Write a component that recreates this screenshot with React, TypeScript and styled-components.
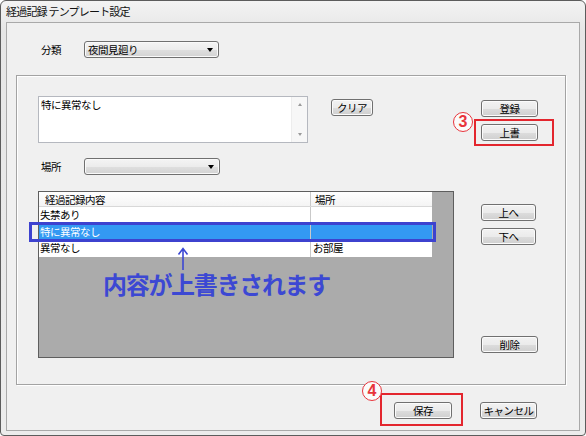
import React from "react";
import styled, { createGlobalStyle } from "styled-components";

const GlobalStyle = createGlobalStyle`
  html, body {
    margin: 0;
    padding: 0;
    background: #ffffff;
  }
  body {
    font-family: "Noto Sans CJK JP", "DejaVu Sans", sans-serif;
  }
`;

const uiFont = `"Noto Sans CJK JP", "DejaVu Sans", sans-serif`;

const Window = styled.div`
  box-sizing: border-box;
  width: 586px;
  height: 436px;
  display: flex;
  flex-direction: column;
  padding: 0 5px 4px 5px;
  border: 1px solid #5c5c5c;
  border-radius: 6px 6px 4px 4px;
  background: linear-gradient(#f3f3f3, #e6e6e6 30px, #ececec);
`;

const TitleBar = styled.div`
  height: 21px;
  line-height: 21px;
  font-family: ${uiFont};
  font-size: 11px;
  letter-spacing: -0.8px;
  color: #111;
`;

const Client = styled.div`
  flex: 1;
  display: flex;
  flex-direction: column;
  border: 1px solid #a9a9a9;
  background: #f0f0f0;
  font-family: ${uiFont};
  font-size: 10.5px;
  letter-spacing: -0.5px;
  color: #000;
`;

const FieldRow = styled.div<{ $pt: number; $pl: number }>`
  display: flex;
  align-items: center;
  padding: ${(p) => p.$pt}px 0 0 ${(p) => p.$pl}px;
`;

const Label = styled.span`
  width: 43px;
  line-height: 17px;
`;

const Combo = styled.div<{ $w: number }>`
  box-sizing: border-box;
  width: ${(p) => p.$w}px;
  height: 17px;
  display: flex;
  align-items: center;
  justify-content: space-between;
  padding: 0 5px 0 3px;
  border: 1px solid #707070;
  border-radius: 3px;
  background: linear-gradient(#f4f4f4 0%, #ececec 50%, #dfdfdf 51%, #d3d3d3 100%);
  box-shadow: inset 0 0 0 1px #fafafa;
`;

const ComboText = styled.span`
  line-height: 15px;
`;

const ComboArrow = styled.span`
  width: 0;
  height: 0;
  border-left: 3px solid transparent;
  border-right: 3px solid transparent;
  border-top: 4px solid #000;
`;

const GroupBox = styled.div`
  box-sizing: border-box;
  width: 550px;
  height: 310px;
  margin: 17px 0 0 9px;
  display: flex;
  justify-content: space-between;
  border: 1px solid #a3a3a3;
  box-shadow: inset 1px 1px 0 #ffffff, 1px 1px 0 #ffffff;
`;

const LeftPane = styled.div`
  display: flex;
  flex-direction: column;
  padding: 20px 0 0 21px;
`;

const MemoRow = styled.div`
  display: flex;
  align-items: flex-start;
  gap: 23px;
`;

const Memo = styled.div`
  box-sizing: border-box;
  width: 270px;
  height: 47px;
  display: flex;
  border: 1px solid #b5b8bf;
  background: #ffffff;
`;

const MemoText = styled.div`
  flex: 1;
  padding: 1px 2px;
  line-height: 14px;
`;

const MemoScroll = styled.div`
  width: 15px;
  display: flex;
  flex-direction: column;
  align-items: center;
  justify-content: space-between;
  padding: 6px 0;
  background: #f7f7f7;
  border-left: 1px solid #ededed;
`;

const ScrollArrow = styled.span<{ $down?: boolean }>`
  width: 0;
  height: 0;
  border-left: 2px solid transparent;
  border-right: 2px solid transparent;
  ${(p) =>
    p.$down ? "border-top: 3px solid #9a9a9a;" : "border-bottom: 3px solid #9a9a9a;"}
`;

const Button = styled.button<{ $w?: number; $mt?: number }>`
  box-sizing: border-box;
  width: ${(p) => p.$w ?? 57}px;
  height: 17px;
  margin: ${(p) => p.$mt ?? 0}px 0 0 0;
  padding: 0;
  border: 1px solid #707070;
  border-radius: 3px;
  background: linear-gradient(#f2f2f2 0%, #ebebeb 50%, #dddddd 51%, #cfcfcf 100%);
  box-shadow: inset 0 0 0 1px #fbfbfb;
  font-family: ${uiFont};
  font-size: 10.5px;
  letter-spacing: -0.5px;
  line-height: 15px;
  color: #000;
`;

const SidePane = styled.div`
  width: 57px;
  display: flex;
  flex-direction: column;
  align-items: flex-start;
  padding: 24px 27px 0 0;
`;

const Marker = styled.div<{ $mt?: number }>`
  position: relative;
  display: flex;
  margin-top: ${(p) => p.$mt ?? 0}px;
`;

const RedFrame = styled.div<{ $l: number; $t: number; $w: number; $h: number }>`
  position: absolute;
  box-sizing: border-box;
  left: ${(p) => p.$l}px;
  top: ${(p) => p.$t}px;
  width: ${(p) => p.$w}px;
  height: ${(p) => p.$h}px;
  border: 2px solid #e3262e;
  pointer-events: none;
`;

const CircleNum = styled.span<{ $l: number; $t: number }>`
  position: absolute;
  box-sizing: border-box;
  left: ${(p) => p.$l}px;
  top: ${(p) => p.$t}px;
  width: 20px;
  height: 20px;
  display: flex;
  align-items: center;
  justify-content: center;
  border: 1.5px solid #e8343c;
  border-radius: 50%;
  background: #fbfbfb;
  color: #e8343c;
  font-family: "Liberation Sans", Arial, sans-serif;
  font-weight: bold;
  font-size: 16px;
  letter-spacing: 0;
  line-height: 1;
`;

const Grid = styled.div`
  position: relative;
  box-sizing: border-box;
  width: 416px;
  height: 167px;
  margin-top: 16px;
  border: 1px solid #5e5e5e;
  background: #ababab;
`;

const GridLine = styled.div<{ $selected?: boolean; $head?: boolean }>`
  width: 393px;
  height: ${(p) => (p.$head ? 15 : 16.6)}px;
  display: flex;
  background: ${(p) =>
    p.$head
      ? "linear-gradient(#ffffff, #f4f4f4)"
      : p.$selected
      ? "#3399f3"
      : "#ffffff"};
  color: ${(p) => (p.$selected ? "#ffffff" : "#000000")};
  border-bottom: ${(p) => (p.$head ? "1px solid #d8d8d8" : "none")};
  box-sizing: border-box;
`;

const Cell = styled.div<{ $w: number; $pl: number; $last?: boolean }>`
  box-sizing: border-box;
  width: ${(p) => p.$w}px;
  padding-left: ${(p) => p.$pl}px;
  line-height: 15px;
  white-space: nowrap;
  border-right: ${(p) => (p.$last ? "none" : "1px solid #c9c9c9")};
`;

const BlueFrame = styled.div`
  position: absolute;
  box-sizing: border-box;
  left: -10px;
  top: 30px;
  width: 407px;
  height: 20px;
  border: 3px solid #3d42cf;
  pointer-events: none;
`;

const Note = styled.div`
  position: absolute;
  left: 64px;
  top: 55px;
  display: flex;
  flex-direction: column;
  align-items: flex-start;
`;

const NoteArrow = styled.svg`
  margin-left: 74px;
  display: block;
`;

const NoteText = styled.div`
  margin-top: 1px;
  font-family: ${uiFont};
  font-weight: bold;
  font-size: 24px;
  letter-spacing: -1.3px;
  line-height: 26px;
  color: #3c48d3;
  white-space: nowrap;
`;

const Footer = styled.div`
  display: flex;
  justify-content: flex-end;
  gap: 28px;
  padding: 17px 42px 0 0;
`;

type Row = { text: string; place: string; selected?: boolean };

const rows: Row[] = [
  { text: "失禁あり", place: "" },
  { text: "特に異常なし", place: "", selected: true },
  { text: "異常なし", place: "お部屋" },
];

export default function App() {
  return (
    <>
      <GlobalStyle />
      <Window>
        <TitleBar>経過記録 テンプレート設定</TitleBar>
        <Client>
          <FieldRow $pt={18} $pl={34}>
            <Label>分類</Label>
            <Combo $w={135}>
              <ComboText>夜間見廻り</ComboText>
              <ComboArrow />
            </Combo>
          </FieldRow>

          <GroupBox>
            <LeftPane>
              <MemoRow>
                <Memo>
                  <MemoText>特に異常なし</MemoText>
                  <MemoScroll>
                    <ScrollArrow />
                    <ScrollArrow $down />
                  </MemoScroll>
                </Memo>
                <Button $w={42} $mt={3}>
                  クリア
                </Button>
              </MemoRow>

              <FieldRow $pt={15} $pl={3}>
                <Label>場所</Label>
                <Combo $w={136}>
                  <ComboText />
                  <ComboArrow />
                </Combo>
              </FieldRow>

              <Grid>
                <GridLine $head>
                  <Cell $w={272} $pl={6}>
                    経過記録内容
                  </Cell>
                  <Cell $w={121} $pl={4} $last>
                    場所
                  </Cell>
                </GridLine>
                {rows.map((r) => (
                  <GridLine key={r.text} $selected={r.selected}>
                    <Cell $w={272} $pl={1}>
                      {r.text}
                    </Cell>
                    <Cell $w={121} $pl={2} $last>
                      {r.place}
                    </Cell>
                  </GridLine>
                ))}
                <BlueFrame />
                <Note>
                  <NoteArrow width="12" height="23" viewBox="0 0 12 23">
                    <path
                      d="M6 2 V23 M1.5 7.5 L6 1.5 L10.5 7.5"
                      fill="none"
                      stroke="#3c48d3"
                      strokeWidth="1.6"
                    />
                  </NoteArrow>
                  <NoteText>内容が上書きされます</NoteText>
                </Note>
              </Grid>
            </LeftPane>

            <SidePane>
              <Button>登録</Button>
              <Marker $mt={7}>
                <Button>上書</Button>
                <RedFrame $l={-7} $t={-5} $w={80} $h={27} />
                <CircleNum $l={-28} $t={-12}>3</CircleNum>
              </Marker>
              <Button $w={55} $mt={63}>
                上へ
              </Button>
              <Button $w={55} $mt={7}>
                下へ
              </Button>
              <Button $mt={91}>削除</Button>
            </SidePane>
          </GroupBox>

          <Footer>
            <Marker>
              <Button $w={58}>保存</Button>
              <RedFrame $l={-14} $t={-9} $w={83} $h={33} />
              <CircleNum $l={-32} $t={-21}>4</CircleNum>
            </Marker>
            <Button>キャンセル</Button>
          </Footer>
        </Client>
      </Window>
    </>
  );
}
